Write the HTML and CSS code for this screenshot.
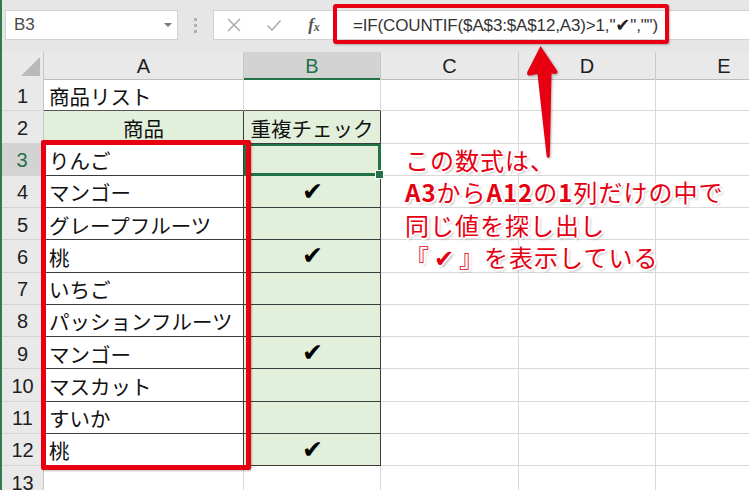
FILE: index.html
```html
<!DOCTYPE html>
<html lang="ja">
<head>
<meta charset="utf-8">
<title>重複チェック</title>
<link rel="stylesheet" href="styles.css">
</head>
<body>
<div class="app">
  <div class="toolbar">
    <div class="namebox">
      <span class="nb-text">B3</span>
      <svg class="dd" width="8" height="4" viewBox="0 0 8 4"><polygon points="0,0 8,0 4,4" fill="#7a7a7a"/></svg>
    </div>
    <div class="grip"><i></i><i></i><i></i></div>
    <div class="fbar">
      <div class="ficon">
        <svg width="16" height="16" viewBox="0 0 16 16"><path d="M2 2 L14 14 M14 2 L2 14" stroke="#a6a6a6" stroke-width="1.4" fill="none"/></svg>
      </div>
      <div class="ficon">
        <svg width="16" height="16" viewBox="0 0 16 16"><path d="M1.5 8.5 L6 13 L14.5 3.5" stroke="#a6a6a6" stroke-width="1.4" fill="none"/></svg>
      </div>
      <div class="ficon fx"><i>f</i><i class="x">x</i></div>
      <div class="ftext">=IF(COUNTIF($A$3:$A$12,A3)&gt;1,"<b>✔</b>","")</div>
    </div>
  </div>

  <div class="sheet">
    <div class="row hdr">
      <div class="corner"><svg width="42" height="27" viewBox="0 0 42 27"><polygon points="38,5 38,24 19,24" fill="#b9b9b9"/></svg></div>
      <div class="ch">A</div>
      <div class="ch on">B</div>
      <div class="ch">C</div>
      <div class="ch">D</div>
      <div class="ch">E</div>
    </div>
    <div class="row">
      <div class="rh">1</div>
      <div class="c tb">商品リスト</div>
      <div class="c tb"></div>
      <div class="c"></div><div class="c"></div><div class="c"></div>
    </div>
    <div class="row">
      <div class="rh">2</div>
      <div class="c t g ctr">商品</div>
      <div class="c t g ctr">重複チェック</div>
      <div class="c"></div><div class="c"></div><div class="c"></div>
    </div>
    <div class="row">
      <div class="rh on">3</div>
      <div class="c t">りんご</div>
      <div class="c t g sel"></div>
      <div class="c"></div><div class="c"></div><div class="c"></div>
    </div>
    <div class="row">
      <div class="rh">4</div>
      <div class="c t">マンゴー</div>
      <div class="c t g ck">✔</div>
      <div class="c"></div><div class="c"></div><div class="c"></div>
    </div>
    <div class="row">
      <div class="rh">5</div>
      <div class="c t">グレープフルーツ</div>
      <div class="c t g"></div>
      <div class="c"></div><div class="c"></div><div class="c"></div>
    </div>
    <div class="row">
      <div class="rh">6</div>
      <div class="c t">桃</div>
      <div class="c t g ck">✔</div>
      <div class="c"></div><div class="c"></div><div class="c"></div>
    </div>
    <div class="row">
      <div class="rh">7</div>
      <div class="c t">いちご</div>
      <div class="c t g"></div>
      <div class="c"></div><div class="c"></div><div class="c"></div>
    </div>
    <div class="row">
      <div class="rh">8</div>
      <div class="c t">パッションフルーツ</div>
      <div class="c t g"></div>
      <div class="c"></div><div class="c"></div><div class="c"></div>
    </div>
    <div class="row">
      <div class="rh">9</div>
      <div class="c t">マンゴー</div>
      <div class="c t g ck">✔</div>
      <div class="c"></div><div class="c"></div><div class="c"></div>
    </div>
    <div class="row">
      <div class="rh">10</div>
      <div class="c t">マスカット</div>
      <div class="c t g"></div>
      <div class="c"></div><div class="c"></div><div class="c"></div>
    </div>
    <div class="row">
      <div class="rh">11</div>
      <div class="c t">すいか</div>
      <div class="c t g"></div>
      <div class="c"></div><div class="c"></div><div class="c"></div>
    </div>
    <div class="row">
      <div class="rh">12</div>
      <div class="c t">桃</div>
      <div class="c t g ck">✔</div>
      <div class="c"></div><div class="c"></div><div class="c"></div>
    </div>
    <div class="row">
      <div class="rh">13</div>
      <div class="c"></div><div class="c"></div>
      <div class="c"></div><div class="c"></div><div class="c"></div>
    </div>
  </div>

  <div class="hl-formula"></div>
  <div class="hl-range"></div>
  <svg class="arrow" width="749" height="490" viewBox="0 0 749 490">
    <path d="M540.5 46 L557 70.5 Q558.5 74 555 74 L551.5 73.5 L549.8 156 Q548.3 160 546.6 156 L537.5 74 L530 75.5 Q526 75.5 527.5 71.5 Z" fill="#e60012"/>
  </svg>
  <div class="note">
    <div>この数式は、</div>
    <div><b>A3</b>から<b>A12</b>の<b>1</b>列だけの中で</div>
    <div>同じ値を探し出し</div>
    <div>『<span class="nck">✔</span>』を表示している</div>
  </div>
</div>
</body>
</html>
```

FILE: styles.css
```css
* { box-sizing: border-box; }

body {
  margin: 0;
  width: 749px;
  height: 490px;
  overflow: hidden;
  background: #ffffff;
  font-family: "Liberation Sans", "Noto Sans CJK JP", sans-serif;
}

.app {
  position: relative;
  width: 749px;
  height: 490px;
  overflow: hidden;
  border-left: 2px solid #2e7d4f;
  background: #ffffff;
}

/* ---------- formula bar ---------- */
.toolbar {
  height: 52px;
  background: #e6e6e6;
  display: flex;
  align-items: flex-start;
  padding: 10px 0 0 3px;
}

.namebox {
  width: 173px;
  height: 30px;
  background: #ffffff;
  border: 1px solid #d2d2d2;
  display: flex;
  align-items: center;
  justify-content: space-between;
  padding: 0 5px 0 8px;
}

.nb-text {
  font-size: 17px;
  color: #4a4a4a;
}

.dd { display: block; }

.grip {
  width: 35px;
  height: 30px;
  display: flex;
  flex-direction: column;
  align-items: center;
  justify-content: center;
  gap: 3px;
}

.grip i {
  display: block;
  width: 3px;
  height: 3px;
  background: #b0b0b0;
}

.fbar {
  flex: 1;
  height: 30px;
  background: #ffffff;
  border: 1px solid #d2d2d2;
  border-right: none;
  display: flex;
  align-items: center;
}

.ficon {
  width: 40px;
  height: 28px;
  display: flex;
  align-items: center;
  justify-content: center;
}

.ficon svg { display: block; }

.fx {
  font-family: "Liberation Serif", serif;
  font-size: 17px;
  color: #555555;
  font-weight: bold;
}

.fx .x {
  font-size: 12px;
  margin-top: 5px;
}

.ftext {
  margin-left: 19px;
  font-size: 17px;
  color: #333333;
  white-space: nowrap;
  letter-spacing: -0.15px;
}

.ftext b {
  font-family: "DejaVu Sans", sans-serif;
  font-size: 18px;
  color: #222222;
}

/* ---------- sheet ---------- */
.row {
  display: grid;
  grid-template-columns: 42px 200px 137px 138px 137px 137px;
  height: 32.25px;
}

.row.hdr { height: 27px; }

.corner {
  background: #e9e9e9;
  border-right: 1px solid #c6c6c6;
  border-bottom: 1px solid #c0c0c0;
}

.corner svg { display: block; }

.ch {
  background: #e9e9e9;
  border-right: 1px solid #c9c9c9;
  border-bottom: 1px solid #bdbdbd;
  display: flex;
  align-items: center;
  justify-content: center;
  font-size: 20px;
  color: #1e1e1e;
  padding-top: 2px;
}

.ch.on {
  background: #d3d3d3;
  color: #217346;
  border-bottom: 2px solid #217346;
}

.rh {
  background: #e9e9e9;
  border-right: 1px solid #c6c6c6;
  border-bottom: 1px solid #d4d4d4;
  display: flex;
  align-items: center;
  justify-content: center;
  font-size: 20px;
  color: #1e1e1e;
  padding-top: 3px;
}

.rh.on {
  background: #d3d3d3;
  color: #217346;
  border-right: 2px solid #217346;
}

.c {
  border-right: 1px solid #d9d9d9;
  border-bottom: 1px solid #d9d9d9;
  display: flex;
  align-items: center;
  padding: 2px 0 0 5px;
  font-family: "Noto Sans CJK JP", sans-serif;
  font-size: 20.5px;
  color: #111111;
  white-space: nowrap;
  overflow: hidden;
}

.c.tb { border-bottom-color: #555555; }

.c.t {
  border-right-color: #3c3c3c;
  border-bottom-color: #3c3c3c;
}

.c.g { background: #e2efda; }

.c.ctr {
  justify-content: center;
  padding-left: 0;
}

.c.ck {
  justify-content: center;
  padding: 0 0 0 1px;
  font-family: "DejaVu Sans", sans-serif;
  font-size: 25px;
  color: #000000;
}

.c.sel {
  position: relative;
  overflow: visible;
  box-shadow: inset 0 0 0 2px #217346;
  border-right-color: #217346;
  border-bottom-color: #217346;
}

.c.sel::after {
  content: "";
  position: absolute;
  right: -4px;
  bottom: -4px;
  width: 7px;
  height: 7px;
  background: #217346;
  border: 1px solid #ffffff;
}

/* ---------- annotations ---------- */
.hl-formula {
  position: absolute;
  left: 331px;
  top: 4px;
  width: 336px;
  height: 40px;
  border: 4px solid #e60012;
  border-radius: 3px;
  box-shadow: 1px 1px 2px rgba(0,0,0,0.25);
}

.hl-range {
  position: absolute;
  left: 39px;
  top: 140px;
  width: 210px;
  height: 330px;
  border: 5px solid #e60012;
  border-radius: 2px;
  box-shadow: 1px 1px 2px rgba(0,0,0,0.25);
}

.arrow {
  position: absolute;
  left: -2px;
  top: 0;
  filter: drop-shadow(1px 1px 1px rgba(0,0,0,0.3));
}

.note {
  position: absolute;
  left: 403px;
  top: 144px;
  font-family: "Noto Sans CJK JP", sans-serif;
  font-size: 24px;
  font-weight: 400;
  letter-spacing: 1px;
  color: #e60012;
  line-height: 32.25px;
  white-space: nowrap;
  text-shadow:
    -1px -1px 0 #fff, 1px -1px 0 #fff, -1px 1px 0 #fff, 1px 1px 0 #fff,
    0 -2px 0 #fff, 0 2px 0 #fff, -2px 0 0 #fff, 2px 0 0 #fff,
    2px 2px 3px rgba(0,0,0,0.35);
}

.note b { font-weight: 700; }

.nck {
  font-family: "DejaVu Sans", sans-serif;
  font-size: 24px;
  margin: 0 4px;
}
```
